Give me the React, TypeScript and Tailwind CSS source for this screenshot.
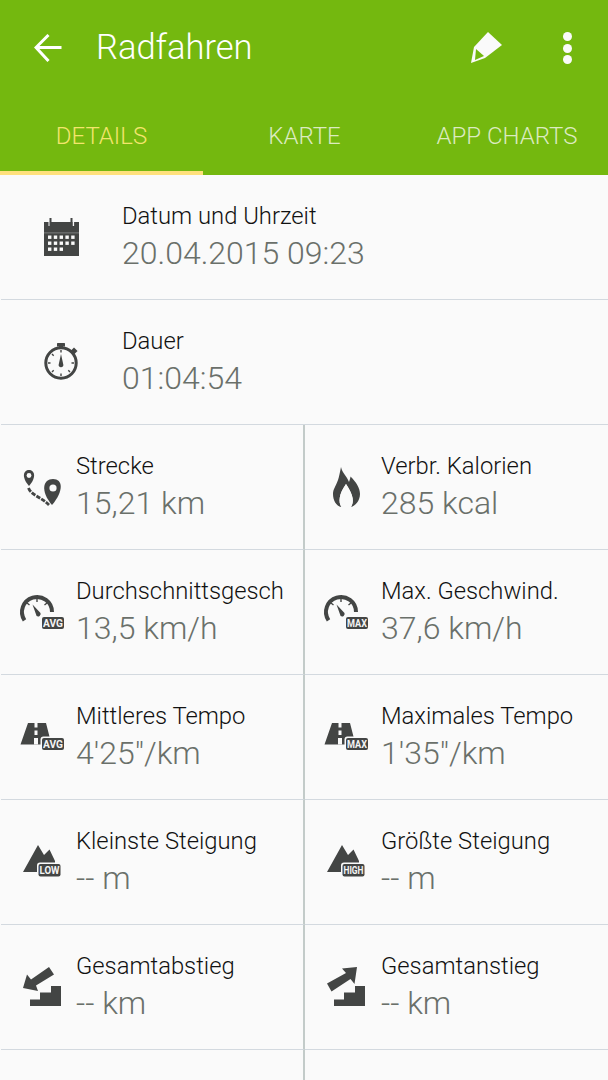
import React from "react";

const D = "#434544";

function Badge({ x, y, w, h, t, size = 11 }: { x: number; y: number; w: number; h: number; t: string; size?: number }) {
  return (
    <g>
      <rect x={x - 1.5} y={y - 1.5} width={w + 3} height={h + 3} rx={3} fill="#fafafa" />
      <rect x={x} y={y} width={w} height={h} rx={2} fill={D} />
      <text
        x={x + w / 2}
        y={y + h / 2 + size * 0.36}
        textAnchor="middle"
        fontSize={size}
        fontWeight={700}
        fill="#f4f4f4"
        fontFamily="Roboto, sans-serif"
        textLength={w - 2}
        lengthAdjust="spacingAndGlyphs"
      >
        {t}
      </text>
    </g>
  );
}

function Svg({ children }: { children: React.ReactNode }) {
  return (
    <svg viewBox="0 0 50 50" className="w-[50px] h-[50px] shrink-0">
      {children}
    </svg>
  );
}

function Calendar() {
  const dots: React.ReactNode[] = [];
  for (let r = 0; r < 3; r++) {
    const cols = r === 2 ? 3 : 5;
    for (let c = 0; c < cols; c++) {
      dots.push(<rect key={`${r}-${c}`} x={11 + c * 5.8} y={23.5 + r * 6} width={3.4} height={3.4} fill="#fafafa" />);
    }
  }
  return (
    <Svg>
      <rect x={7} y={10} width={35} height={34} fill={D} />
      <rect x={11.5} y={10} width={1.6} height={4} fill="#fafafa" />
      <rect x={35.5} y={10} width={1.6} height={4} fill="#fafafa" />
      <rect x={12.5} y={6} width={2} height={8} fill={D} />
      <rect x={33.5} y={6} width={2} height={8} fill={D} />
      <rect x={7} y={20.5} width={35} height={0.8} fill="#8a8c8b" />
      {dots}
    </Svg>
  );
}

function Stopwatch() {
  return (
    <Svg>
      <circle cx={24} cy={26} r={15.2} fill="none" stroke={D} strokeWidth={3} />
      <rect x={20} y={6} width={8} height={3.5} rx={0.5} fill={D} />
      <rect x={22} y={9} width={4} height={3} fill={D} />
      <rect x={34.5} y={11.5} width={5} height={5} fill={D} transform="rotate(45 37 14)" />
      <path d="M24 17 L26.2 27 A2.4 2.4 0 1 1 21.8 27 Z" fill={D} />
      <g stroke={D} strokeWidth={1.4}>
        <path d="M24 13 V15.5 M24 36.5 V39 M11 26 H13.5 M34.5 26 H37 M15 35 L16.7 33.3 M33 35 L31.3 33.3 M15 17 L16.7 18.7" />
      </g>
    </Svg>
  );
}

function Route() {
  return (
    <Svg>
      <path d="M12 24 C4 15 6.5 8 12 8 C17.5 8 20 15 12 24 Z" fill={D} />
      <circle cx={12} cy={13.5} r={2.4} fill="#fafafa" />
      <path d="M35 43 C23 29 26 17 36 17 C46 17 47 29 35 43 Z" fill={D} />
      <circle cx={36} cy={26} r={3.6} fill="#fafafa" />
      <path d="M11.5 26 C14 33 24 35 32 43" fill="none" stroke={D} strokeWidth={2.8} strokeDasharray="4.5 1.2" />
    </Svg>
  );
}

function Flame() {
  return (
    <Svg>
      <path
        d="M20 5 C21 11 26 14 28 20 C29 17 29.5 15.5 29.5 14.5 C35 20 39 26 39 32 C39 39 34 44 30 45 C33 40 33 34 25 22 C18 32 17 40 20.5 45 C15 44 12 38 12 32 C12 27 15 24 17 18 C18 15 19 10 20 5 Z"
        fill={D}
      />
      <path d="M20.5 45 C17 40 18 32 25 22 C33 34 33 40 30 45 Z" fill="#fafafa" />
    </Svg>
  );
}

function Gauge({ label }: { label: string }) {
  return (
    <Svg>
      <path d="M7.5 33.3 A15 15 0 1 1 35 25" fill="none" stroke={D} strokeWidth={4} />
      <path d="M20 12 V15 M10 16 L12.5 18 M30 16 L27.5 18" stroke={D} strokeWidth={1.4} />
      <path d="M15.5 17.5 L23.5 26 A2.6 2.6 0 0 1 19.6 29 Z" fill={D} />
      <Badge x={25} y={30} w={22} h={12} t={label} />
    </Svg>
  );
}

function Road({ label }: { label: string }) {
  return (
    <Svg>
      <path d="M11 11 H17.5 V15.5 H20.5 V11 H29 L34.5 32.5 H3.5 Z" fill={D} />
      <rect x={17.5} y={18.5} width={3} height={4.5} fill="#fafafa" />
      <rect x={17} y={26} width={4} height={6.5} fill="#fafafa" />
      <Badge x={25} y={26} w={22} h={12} t={label} />
    </Svg>
  );
}

function Mountain({ label }: { label: string }) {
  return (
    <Svg>
      <path d="M21 8 L27 18 L32.5 12.5 L38 24 L38 35 L6 35 Z" fill={D} />
      <Badge x={21.5} y={27} w={22} h={12.5} t={label} size={10.5} />
    </Svg>
  );
}

function Stairs({ up }: { up?: boolean }) {
  return (
    <Svg>
      <path d="M13 44 V37.5 H23 V30.5 H34 V24 H44 V44 Z" fill={D} />
      {up ? (
        <path d="M36 5 L33.5 22 L29.5 17 L10.5 29.5 L6 21.5 L25 11 L21 6.5 Z" fill={D} />
      ) : (
        <path d="M6 26 L10 12.5 L14 17.5 L32 5 L37 12.5 L19 23.5 L21 29 Z" fill={D} />
      )}
    </Svg>
  );
}

const cells: { icon: React.ReactNode; label: string; value: string }[][] = [
  [
    { icon: <Route />, label: "Strecke", value: "15,21 km" },
    { icon: <Flame />, label: "Verbr. Kalorien", value: "285 kcal" },
  ],
  [
    { icon: <Gauge label="AVG" />, label: "Durchschnittsgesch", value: "13,5 km/h" },
    { icon: <Gauge label="MAX" />, label: "Max. Geschwind.", value: "37,6 km/h" },
  ],
  [
    { icon: <Road label="AVG" />, label: "Mittleres Tempo", value: "4'25\"/km" },
    { icon: <Road label="MAX" />, label: "Maximales Tempo", value: "1'35\"/km" },
  ],
  [
    { icon: <Mountain label="LOW" />, label: "Kleinste Steigung", value: "-- m" },
    { icon: <Mountain label="HIGH" />, label: "Größte Steigung", value: "-- m" },
  ],
  [
    { icon: <Stairs />, label: "Gesamtabstieg", value: "-- km" },
    { icon: <Stairs up />, label: "Gesamtanstieg", value: "-- km" },
  ],
];

function Text({ label, value }: { label: string; value: string }) {
  return (
    <div className="flex flex-col pb-[5px] min-w-0">
      <div className="text-[23.8px] leading-[36px] font-light text-[#111111] whitespace-nowrap">{label}</div>
      <div className="text-[32px] leading-[38px] font-light text-[#6a706a] whitespace-nowrap">{value}</div>
    </div>
  );
}

function WideRow({ icon, label, value }: { icon: React.ReactNode; label: string; value: string }) {
  return (
    <div className="h-[125px] flex items-center border-b border-[#d3d9df] ml-px">
      <div className="w-[121px] flex justify-center">{icon}</div>
      <Text label={label} value={value} />
    </div>
  );
}

export default function App() {
  return (
    <div className="w-[608px] h-[1080px] overflow-hidden bg-[#fafafa] font-['Roboto',sans-serif]">
      <header className="bg-[#74b80f] h-[175px] flex flex-col">
        <div className="h-[96px] flex items-center">
          <div className="w-[96px] flex pl-[34px]">
            <svg viewBox="0 0 28 28" className="w-[28px] h-[28px]">
              <path d="M27.5 13.5 H3 M14.5 1 L2 13.5 L14.5 27" fill="none" stroke="#fff" strokeWidth={3} />
            </svg>
          </div>
          <div className="text-[34.5px] font-light text-white flex-1">Radfahren</div>
          <svg viewBox="0 0 40 40" className="w-[40px] h-[40px] mr-[54px]">
            <path d="M19 4 L33 17 L16 30 L2 35 L5 19 Z" fill="#fafafa" />
            <path d="M7 21 L15 28 L6 32 Z" fill="#74b80f" />
          </svg>
          <div className="flex flex-col gap-[2.5px] mr-[36px]">
            <span className="w-[9px] h-[9px] rounded-full bg-[#fafafa]" />
            <span className="w-[9px] h-[9px] rounded-full bg-[#fafafa]" />
            <span className="w-[9px] h-[9px] rounded-full bg-[#fafafa]" />
          </div>
        </div>
        <nav className="flex h-[79px] text-[24px] font-light">
          <div className="w-[203px] h-[79px] flex items-center justify-center pt-[5px] text-[#f3e56c] border-b-4 border-[#ffe07c]">
            DETAILS
          </div>
          <div className="w-[203px] flex items-center justify-center text-[#dcebc0]">KARTE</div>
          <div className="w-[202px] flex items-center justify-center text-[#dcebc0]">APP CHARTS</div>
        </nav>
      </header>

      <WideRow icon={<Calendar />} label="Datum und Uhrzeit" value="20.04.2015 09:23" />
      <WideRow icon={<Stopwatch />} label="Dauer" value="01:04:54" />

      {cells.map((row, i) => (
        <div key={i} className="grid grid-cols-[305px_303px] h-[125px]">
          {row.map((c, j) => (
            <div
              key={j}
              className={
                j === 0
                  ? "flex items-center pl-4 gap-[9px] border-b border-r-2 border-b-[#d3d9df] border-r-[#c3cbc9] ml-px"
                  : "flex items-center pl-4 gap-[10px] border-b border-b-[#d3d9df]"
              }
            >
              {c.icon}
              <Text label={c.label} value={c.value} />
            </div>
          ))}
        </div>
      ))}
      <div className="grid grid-cols-[305px_303px] h-[125px]">
        <div className="border-r-2 border-[#c3cbc9]" />
        <div />
      </div>
    </div>
  );
}
